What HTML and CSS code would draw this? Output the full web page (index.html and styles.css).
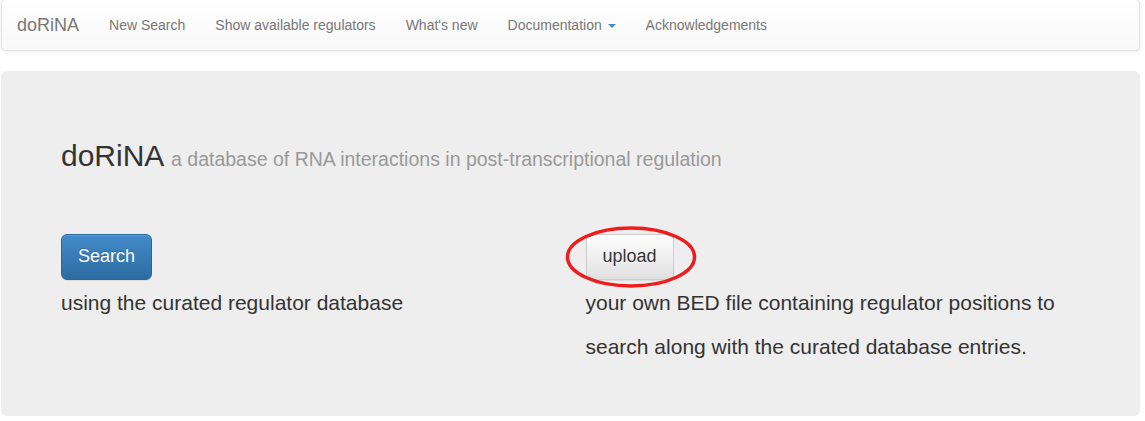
FILE: index.html
```html
<!DOCTYPE html>
<html lang="en">
<head>
<meta charset="utf-8">
<title>doRiNA</title>
<link rel="stylesheet" href="styles.css">
</head>
<body>
<div class="page">
  <nav class="navbar">
    <a class="brand" href="#">doRiNA</a>
    <ul class="nav">
      <li><a href="#">New Search</a></li>
      <li><a href="#">Show available regulators</a></li>
      <li><a href="#">What's new</a></li>
      <li><a href="#">Documentation <span class="caret"></span></a></li>
      <li><a href="#">Acknowledgements</a></li>
    </ul>
  </nav>
  <div class="jumbotron">
    <h2 class="title">doRiNA <small>a database of RNA interactions in post-transcriptional regulation</small></h2>
    <div class="row">
      <div class="col">
        <button class="btn btn-primary">Search</button>
        <p class="lead">using the curated regulator database</p>
      </div>
      <div class="col">
        <div class="upload-wrap">
          <button class="btn btn-default">upload</button>
          <svg class="annot" width="140" height="66" viewBox="0 0 140 66" aria-hidden="true">
            <ellipse cx="70" cy="33" rx="63.5" ry="29" fill="none" stroke="#ee1c1c" stroke-width="3.5"/>
          </svg>
        </div>
        <p class="lead">your own BED file containing regulator positions to search along with the curated database entries.</p>
      </div>
    </div>
  </div>
</div>
</body>
</html>
```

FILE: styles.css
```css
* { box-sizing: border-box; }
html, body { margin: 0; padding: 0; background: #fff; }
body {
  font-family: "Liberation Sans", Arial, Helvetica, sans-serif;
  font-size: 14px;
  line-height: 1.42857;
  color: #333;
}
.page {
  margin: 0 5px 0 1px;
}
.navbar {
  margin-top: -1px;
  margin-bottom: 20px;
  min-height: 52px;
  display: flex;
  align-items: flex-start;
  padding: 0 15px;
  border: 1px solid #e3e3e3;
  border-radius: 4px;
  background: linear-gradient(to bottom, #ffffff 0%, #f8f8f8 100%);
  box-shadow: inset 0 1px 0 rgba(255,255,255,.15), 0 1px 5px rgba(0,0,0,.075);
}
.brand {
  margin-left: -15px;
  padding: 15px;
  height: 50px;
  font-size: 18px;
  line-height: 20px;
  color: #777;
  text-decoration: none;
}
.nav {
  list-style: none;
  margin: 0;
  padding: 0;
  display: flex;
}
.nav a {
  display: block;
  padding: 15px;
  line-height: 20px;
  color: #777;
  text-decoration: none;
}
.caret {
  display: inline-block;
  width: 0;
  height: 0;
  margin-left: 2px;
  vertical-align: middle;
  border-top: 4px solid #428bca;
  border-right: 4px solid transparent;
  border-left: 4px solid transparent;
}
.jumbotron {
  background: #eee;
  border-radius: 6px;
  padding: 48px 60px 47px;
}
.title {
  margin: 20px 0 10px;
  font-size: 30px;
  font-weight: 500;
  line-height: 1.1;
  color: #333;
}
.title small {
  font-size: 65%;
  font-weight: normal;
  color: #999;
}
.row {
  display: flex;
  margin: 62px -15px 0;
}
.col {
  flex: 1 1 0;
  padding: 0 15px;
}
.btn {
  display: inline-block;
  font-family: inherit;
  font-size: 18px;
  line-height: 1.3333;
  padding: 10px 16px;
  border-radius: 6px;
  border: 1px solid transparent;
  cursor: pointer;
  margin: 0;
  vertical-align: top;
}
.btn-primary {
  color: #fff;
  background: linear-gradient(to bottom, #428bca 0%, #2d6ca2 100%);
  border-color: #2b669a;
  text-shadow: 0 -1px 0 rgba(0,0,0,.2);
  box-shadow: inset 0 1px 0 rgba(255,255,255,.15), 0 1px 1px rgba(0,0,0,.075);
}
.btn-default {
  color: #333;
  background: linear-gradient(to bottom, #ffffff 0%, #e0e0e0 100%);
  border-color: #ccc;
  text-shadow: 0 1px 0 #fff;
  box-shadow: inset 0 1px 0 rgba(255,255,255,.15), 0 1px 1px rgba(0,0,0,.075);
}
.upload-wrap {
  position: relative;
  display: inline-block;
  vertical-align: top;
}
.annot {
  position: absolute;
  left: -25px;
  top: -10px;
  pointer-events: none;
  overflow: visible;
}
.lead {
  margin: 1px 0 0;
  font-size: 21px;
  font-weight: 200;
  line-height: 44px;
  color: #333;
}
```
